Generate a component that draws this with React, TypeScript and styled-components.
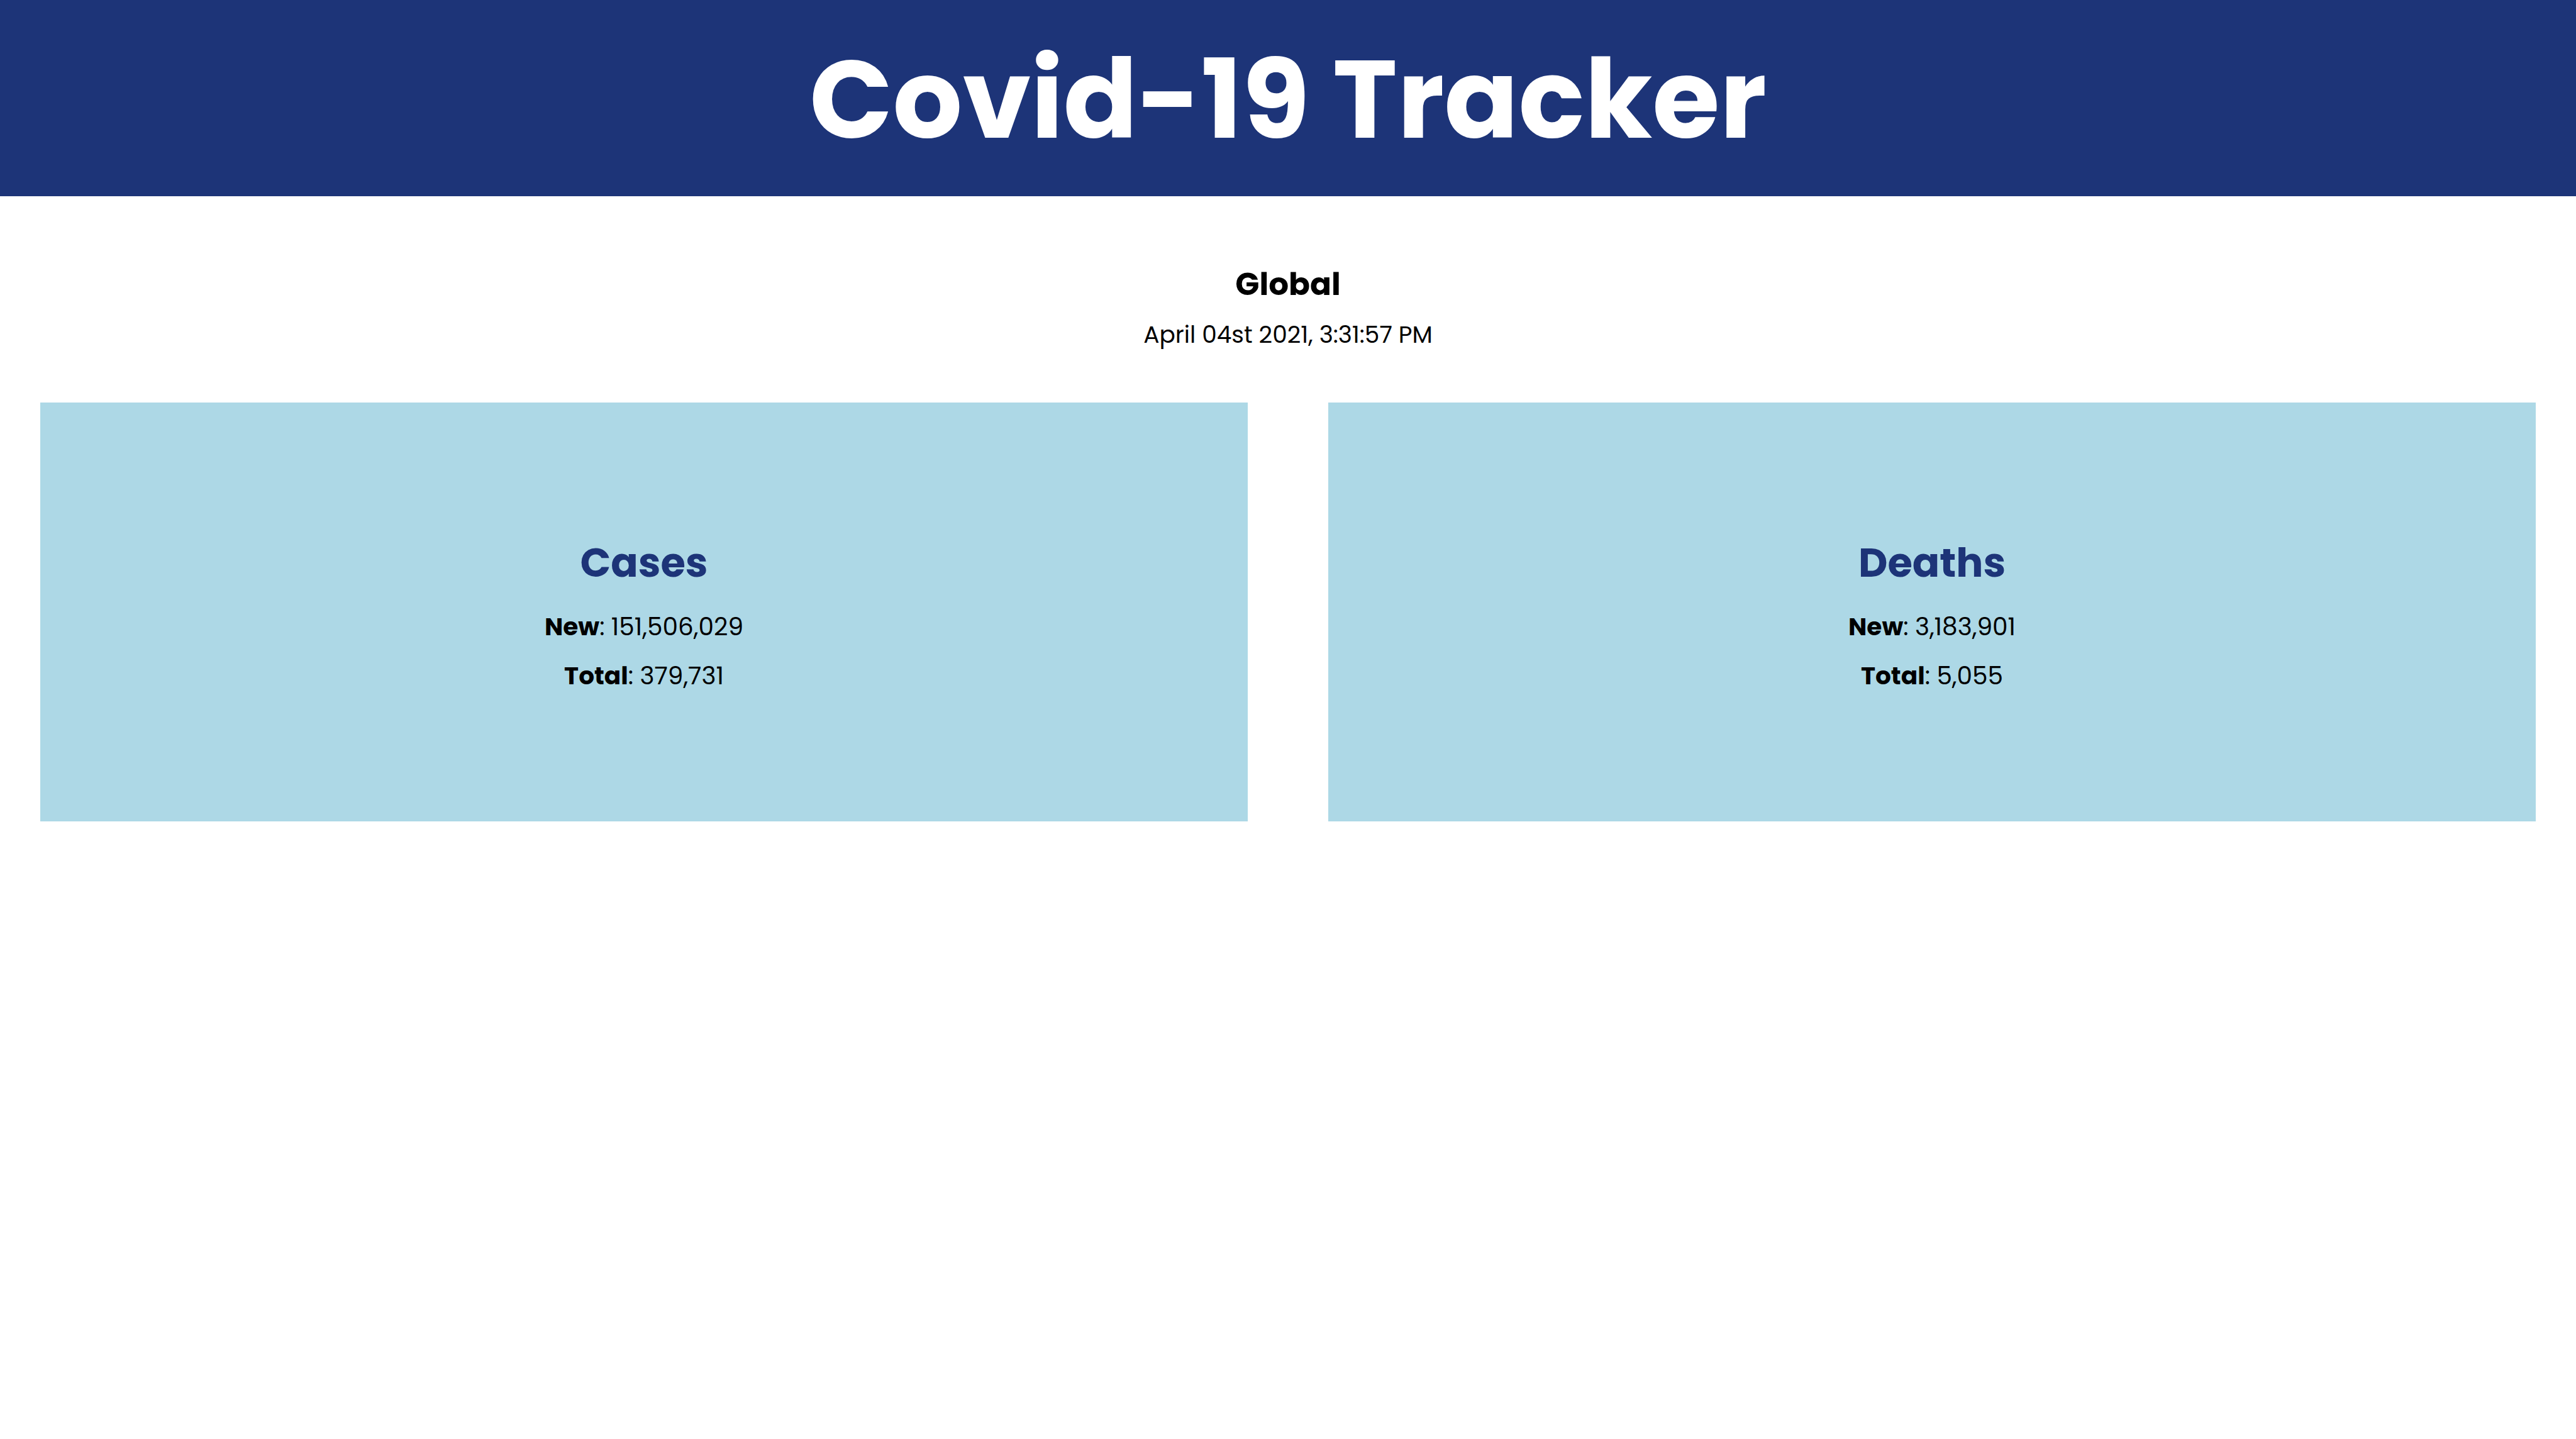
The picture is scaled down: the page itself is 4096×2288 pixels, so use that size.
import React from "react";
import styled, { createGlobalStyle } from "styled-components";

const GlobalStyle = createGlobalStyle`
  html, body {
    margin: 0;
    padding: 0;
    background: #ffffff;
  }
  body {
    font-family: Poppins, "Open Sans", "Noto Sans", sans-serif;
    color: #000000;
  }
  * { box-sizing: border-box; }
`;

const Header = styled.header`
  height: 312px;
  background: #1d3478;
  display: flex;
  align-items: center;
  justify-content: center;
`;

const Title = styled.h1`
  margin: 0;
  color: #ffffff;
  font-size: 174px;
  font-weight: 700;
  line-height: 1.2;
  padding-top: 4px;
`;

const Info = styled.section`
  display: flex;
  flex-direction: column;
  align-items: center;
  padding-top: 110px;
`;

const Region = styled.h3`
  margin: 0;
  font-size: 50px;
  font-weight: 700;
  line-height: 1.2;
`;

const DateText = styled.p`
  margin: 28px 0 0;
  font-size: 37.5px;
  font-weight: 400;
  line-height: 1.2;
`;

const Cards = styled.div`
  display: grid;
  grid-template-columns: 1fr 1fr;
  gap: 128px;
  padding: 0 64px;
  margin-top: 85px;
`;

const Card = styled.div`
  height: 666px;
  background: #add8e6;
  display: flex;
  flex-direction: column;
  align-items: center;
  justify-content: center;
  padding-top: 10px;
`;

const CardTitle = styled.h2`
  margin: 0 0 40px;
  font-size: 64px;
  font-weight: 700;
  line-height: 1.2;
  color: #1d3478;
`;

const Stat = styled.p<{ $gap?: number }>`
  margin: ${(p) => p.$gap ?? 0}px 0 0;
  font-size: 39px;
  line-height: 1.2;
  font-weight: 400;
`;

const Label = styled.b`
  font-weight: 700;
`;

type CardData = { title: string; newVal: string; total: string };

const cards: CardData[] = [
  { title: "Cases", newVal: "151,506,029", total: "379,731" },
  { title: "Deaths", newVal: "3,183,901", total: "5,055" },
];

export default function App() {
  return (
    <>
      <GlobalStyle />
      <Header>
        <Title>Covid-19 Tracker</Title>
      </Header>
      <Info>
        <Region>Global</Region>
        <DateText>April 04st 2021, 3:31:57 PM</DateText>
      </Info>
      <Cards>
        {cards.map((c) => (
          <Card key={c.title}>
            <CardTitle>{c.title}</CardTitle>
            <Stat>
              <Label>New</Label>: {c.newVal}
            </Stat>
            <Stat $gap={31}>
              <Label>Total</Label>: {c.total}
            </Stat>
          </Card>
        ))}
      </Cards>
    </>
  );
}
